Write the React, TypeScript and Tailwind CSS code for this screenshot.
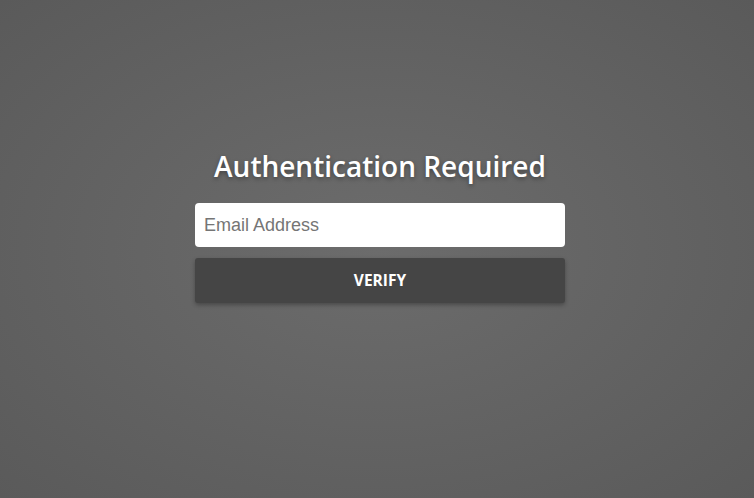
import React from "react";

export default function App() {
  return (
    <div className="w-full h-[498px] overflow-hidden bg-[radial-gradient(ellipse_at_center,#6c6c6c_0%,#5a5a5a_100%)] flex flex-col items-center pt-[148px] pl-[6px]">
      <h1 className="font-['Open_Sans',sans-serif] text-[28px] leading-[36px] font-semibold text-white [text-shadow:0_2px_4px_rgba(0,0,0,0.35)]">
        Authentication Required
      </h1>
      <div className="w-[370px] mt-[19px] flex flex-col gap-[11px]">
        <input
          type="text"
          placeholder="Email Address"
          className="font-['Liberation_Sans',Arial,sans-serif] w-full h-[44px] rounded-[4px] bg-white px-[9px] text-[18px] text-[#333] placeholder:text-[#757575] outline-none"
        />
        <button className="font-['Open_Sans',sans-serif] w-full h-[45px] rounded-[3px] bg-[#454545] text-white text-[15.5px] font-bold shadow-[0_2px_4px_rgba(0,0,0,0.3)]">
          VERIFY
        </button>
      </div>
    </div>
  );
}
